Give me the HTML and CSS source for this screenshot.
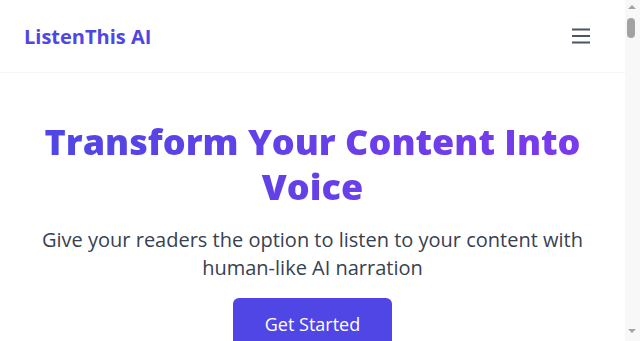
FILE: index.html
```html
<!DOCTYPE html>
<html lang="en">
<head>
<meta charset="utf-8">
<title>ListenThis AI</title>
<link rel="stylesheet" href="styles.css">
</head>
<body>
<div class="page">
  <header class="site-header">
    <a class="logo" href="#">ListenThis AI</a>
    <button class="menu-btn" aria-label="Menu">
      <svg width="24" height="24" viewBox="0 0 24 24" fill="none" stroke="currentColor" stroke-width="2" stroke-linecap="butt">
        <path d="M3 5.5h18M3 12h18M3 18.5h18"/>
      </svg>
    </button>
  </header>
  <main>
    <section class="hero">
      <h1 class="hero-title">Transform Your Content Into Voice</h1>
      <p class="hero-sub">Give your readers the option to listen to your content with human-like AI narration</p>
      <a class="btn-primary" href="#">Get Started</a>
    </section>
    <section class="features">
      <h2>Features</h2>
      <p>Natural voices, easy embedding and analytics for every article.</p>
    </section>
  </main>
</div>
<div class="scrollbar" aria-hidden="true">
  <span class="sb-arrow sb-up"></span>
  <span class="sb-thumb"></span>
  <span class="sb-arrow sb-down"></span>
</div>
</body>
</html>
```
FILE: styles.css
```css
* { box-sizing: border-box; }
html, body { margin: 0; padding: 0; }
body {
  font-family: "Open Sans", "Liberation Sans", sans-serif;
  background: #ffffff;
  color: #111827;
}
.page {
  margin-right: 15px;
}
.site-header {
  height: 73px;
  display: flex;
  align-items: center;
  justify-content: space-between;
  padding: 0 32px 0 24px;
  border-bottom: 1px solid #f3f4f6;
}
.logo {
  font-size: 20px;
  font-weight: 700;
  color: #4f46e5;
  text-decoration: none;
}
.menu-btn {
  background: none;
  border: 0;
  padding: 0;
  color: #4b5563;
  display: flex;
}
.hero {
  display: flex;
  flex-direction: column;
  align-items: center;
  text-align: center;
  padding: 46px 24px 80px;
}
.hero-title {
  margin: 0;
  font-size: 36px;
  line-height: 45px;
  font-weight: 800;
  background: linear-gradient(90deg, #4f46e5 0%, #7c3aed 100%);
  -webkit-background-clip: text;
  background-clip: text;
  color: transparent;
  max-width: 560px;
}
.hero-sub {
  margin: 17px 0 0;
  font-size: 20px;
  line-height: 28px;
  color: #374151;
  max-width: 560px;
}
.btn-primary {
  margin-top: 16px;
  display: inline-block;
  background: #4f46e5;
  color: #ffffff;
  text-decoration: none;
  font-size: 18px;
  line-height: 28px;
  padding: 12px 32px;
  border-radius: 6px;
}
.features {
  min-height: 3000px;
  padding: 64px 24px;
  text-align: center;
}
.scrollbar {
  position: fixed;
  top: 0;
  right: 0;
  width: 15px;
  height: 100vh;
  background: #f8f8f8;
}
.sb-arrow {
  position: absolute;
  left: 3px;
  width: 0;
  height: 0;
  border-left: 4.5px solid transparent;
  border-right: 4.5px solid transparent;
}
.sb-up {
  top: 5px;
  border-bottom: 4px solid #a3a3a3;
}
.sb-down {
  bottom: 8px;
  border-top: 4px solid #a3a3a3;
}
.sb-thumb {
  position: absolute;
  top: 18px;
  left: 2px;
  width: 8px;
  height: 20px;
  border-radius: 4px;
  background: #a3a3a3;
}
```
